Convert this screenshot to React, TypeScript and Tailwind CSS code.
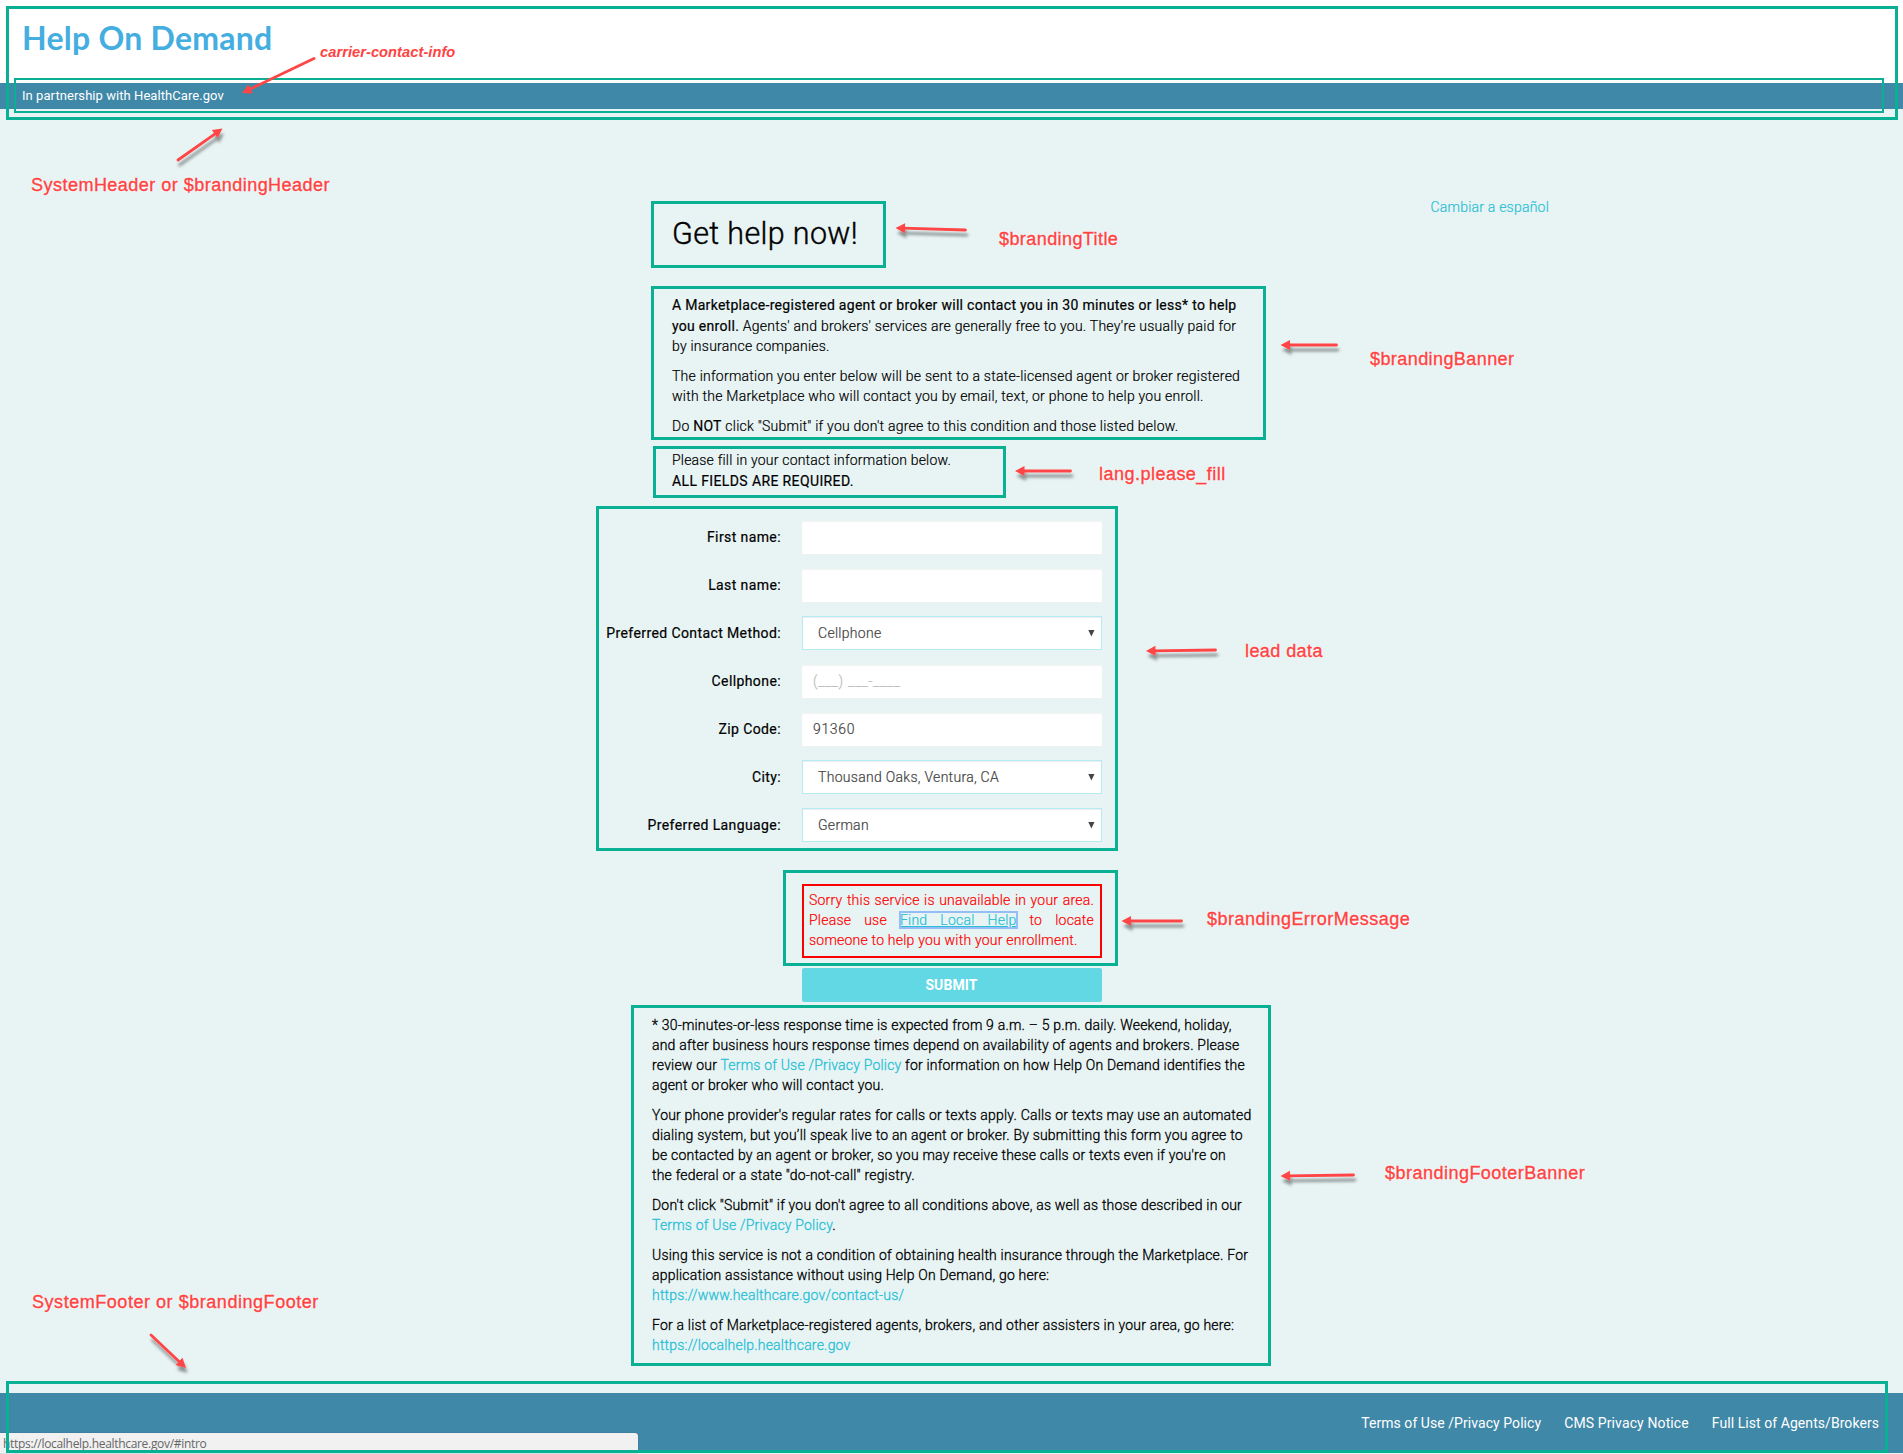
import type { ReactNode } from "react";

const Frame = ({ className }: { className: string }) => (
  <div className={`pointer-events-none absolute border-[#0ab094] ${className}`} />
);

const Note = ({ className, children }: { className: string; children: ReactNode }) => (
  <span
    className={`absolute whitespace-nowrap font-['Liberation_Sans',sans-serif] leading-5 text-[#ff4242] [text-shadow:0_0_2px_#fff,0_0_2px_#fff] ${className}`}
  >
    {children}
  </span>
);

const Link = ({ children, className = "" }: { children: ReactNode; className?: string }) => (
  <a href="#" className={`text-[#2bbfd6] ${className}`}>
    {children}
  </a>
);

type ArrowData = { from: [number, number]; to: [number, number]; flat?: boolean };

const arrows: ArrowData[] = [
  { from: [314, 58.5], to: [242, 93], flat: true },
  { from: [178, 160], to: [222.5, 128.5] },
  { from: [965.5, 230], to: [895.5, 228] },
  { from: [1336.5, 345], to: [1280.5, 345] },
  { from: [1070.5, 471], to: [1015, 471] },
  { from: [1215.5, 650], to: [1146, 651] },
  { from: [1181.5, 921], to: [1121.5, 921] },
  { from: [1353.5, 1175], to: [1280.5, 1176] },
  { from: [151, 1335], to: [186, 1368] },
];

function Arrow({ from, to, flat }: ArrowData) {
  const dx = to[0] - from[0];
  const dy = to[1] - from[1];
  const length = Math.hypot(dx, dy);
  const angle = (Math.atan2(dy, dx) * 180) / Math.PI;
  return (
    <g filter={flat ? undefined : "url(#arrow-shadow)"}>
      <g transform={`translate(${from[0]} ${from[1]}) rotate(${angle})`} fill="#ff4545">
        <path d={`M0 0H${length - 7}`} stroke="#ff4545" strokeWidth="2.8" strokeLinecap="round" />
        <path d={`M${length} 0l-9.5 -5v10z`} />
      </g>
    </g>
  );
}

const fields = [
  { label: "First name:", kind: "input" },
  { label: "Last name:", kind: "input" },
  { label: "Preferred Contact Method:", kind: "select", value: "Cellphone" },
  { label: "Cellphone:", kind: "input", placeholder: "(___) ___-____" },
  { label: "Zip Code:", kind: "input", value: "91360" },
  { label: "City:", kind: "select", value: "Thousand Oaks, Ventura, CA" },
  { label: "Preferred Language:", kind: "select", value: "German" },
];

export default function App() {
  return (
    <div className="relative flex h-[1454px] w-[1903px] flex-col overflow-hidden bg-[#e8f4f4] font-['Roboto',sans-serif] text-sm leading-5 text-black">
      <header className="relative">
        <div className="h-[83px] bg-white pl-[22px] pt-[18px]">
          <h1 className="font-['Lato',sans-serif] text-[32px] font-bold leading-10 tracking-[0.25px] text-[#45aee0]">
            Help On Demand
          </h1>
        </div>
        <div className="h-[26px] bg-[#4088a8] pl-[22px] text-[13px] leading-[25px] tracking-[0.06px] text-white">
          In partnership with HealthCare.gov
        </div>
        <Frame className="left-[6px] top-[6px] h-[114px] w-[1892px] border-[3px]" />
        <Frame className="left-[14px] top-[78px] h-[35px] w-[1870px] border-2" />
      </header>

      <main className="ml-[652px] grow">
        <section className="relative mt-[88px] flex w-[897px] items-start justify-between pl-5 pt-[17px] font-light [-webkit-text-stroke:0.2px_currentColor]">
          <h2 className="text-[30.5px] leading-10 tracking-[0.35px] [-webkit-text-stroke:0.4px_currentColor]">Get help now!</h2>
          <Link className="-mt-[17px] tracking-[0.22px]">Cambiar a español</Link>
          <Frame className="left-[-1px] top-[4px] h-[67px] w-[235px] border-[3px]" />
        </section>

        <section className="relative mt-[41px] flex w-[620px] flex-col gap-2.5 whitespace-nowrap pl-5 font-light tracking-[0.24px] [-webkit-text-stroke:0.2px_currentColor]">
          <p>
            <span className="block h-[21px] font-normal tracking-[0.29px]">
              A Marketplace-registered agent or broker will contact you in 30 minutes or less* to help
            </span>
            <span className="font-normal tracking-[0.29px]">you enroll.</span> Agents' and brokers' services are
            generally free to you. They're usually paid for
            <br />
            by insurance companies.
          </p>
          <p>
            The information you enter below will be sent to a state-licensed agent or broker registered
            <br />
            with the Marketplace who will contact you by email, text, or phone to help you enroll.
          </p>
          <p>
            Do <b>NOT</b> click "Submit" if you don't agree to this condition and those listed below.
          </p>
          <Frame className="left-[-1px] top-[-9px] h-[154px] w-[615px] border-[3px]" />
        </section>

        <section className="relative mt-[14px] pl-5 [-webkit-text-stroke:0.2px_currentColor]">
          <p className="h-[21px] font-light tracking-[0.2px]">Please fill in your contact information below.</p>
          <p className="font-normal tracking-[0.38px]">ALL FIELDS ARE REQUIRED.</p>
          <Frame className="left-[1px] top-[-4px] h-[52px] w-[353px] border-[3px]" />
        </section>

        <section className="relative -ml-[52px] mt-[29px] flex w-[502px] flex-col gap-[14px] [-webkit-text-stroke:0.2px_currentColor]">
          {fields.map((f) => (
            <div key={f.label} className="grid h-[34px] grid-cols-[181px_300px] grid-rows-[34px] gap-x-[21px]">
              <label className="text-right leading-[34px] tracking-[0.4px]">{f.label}</label>
              {f.kind === "select" ? (
                <div className="flex items-center justify-between border border-[#b5ebf3] bg-white pl-[15px] pr-[6px] font-light tracking-[0.29px] text-[#444] shadow-[inset_0_1px_1px_rgba(0,0,0,0.075)]">
                  {f.value}
                  <svg width="7" height="7" viewBox="0 0 7 7" fill="#444">
                    <path d="M0.3 0h6.2L3.4 6.5z" />
                  </svg>
                </div>
              ) : (
                <div className="flex items-center border-t border-[#ebf4f4] bg-white pb-px pl-[11px] font-light tracking-[0.65px] text-[#444] shadow-[inset_0_1px_1px_rgba(0,0,0,0.05)]">
                  {f.value}
                  {f.placeholder && <span className="tracking-[0.75px] text-[#bbb]">{f.placeholder}</span>}
                </div>
              )}
            </div>
          ))}
          <Frame className="left-[-4px] top-[-14px] h-[345px] w-[522px] border-[3px]" />
        </section>

        <section className="relative ml-[150px] mt-[42px] w-[300px]">
          <p className="h-[74px] border-2 border-[red] pl-[5px] pr-[6px] pt-1 text-justify font-light tracking-[0.22px] text-[red] [-webkit-text-stroke:0.2px_currentColor]">
            Sorry this service is unavailable in your area. Please use{" "}
            <Link className="underline outline-2 -outline-offset-1 outline-[#94bdf5]">Find Local Help</Link> to locate
            someone to help you with your enrollment.
          </p>
          <Frame className="left-[-19px] top-[-14px] h-[96px] w-[335px] border-[3px]" />
        </section>

        <button className="ml-[150px] mt-[10px] block h-[34px] w-[300px] rounded-[2px] bg-[#62d8e5] pr-px font-bold tracking-[0.1px] text-white">
          SUBMIT
        </button>

        <section className="relative mt-[13px] flex w-[620px] flex-col gap-2.5 whitespace-nowrap font-light tracking-[0.2px] [-webkit-text-stroke:0.3px_currentColor]">
          <p>
            * 30-minutes-or-less response time is expected from 9 a.m. – 5 p.m. daily. Weekend, holiday,
            <br />
            and after business hours response times depend on availability of agents and brokers. Please
            <br />
            review our <Link>Terms of Use /Privacy Policy</Link> for information on how Help On Demand identifies the
            <br />
            agent or broker who will contact you.
          </p>
          <p>
            Your phone provider's regular rates for calls or texts apply. Calls or texts may use an automated
            <br />
            dialing system, but you’ll speak live to an agent or broker. By submitting this form you agree to
            <br />
            be contacted by an agent or broker, so you may receive these calls or texts even if you're on
            <br />
            the federal or a state "do-not-call" registry.
          </p>
          <p>
            Don't click "Submit" if you don't agree to all conditions above, as well as those described in our
            <br />
            <Link>Terms of Use /Privacy Policy</Link>.
          </p>
          <p>
            Using this service is not a condition of obtaining health insurance through the Marketplace. For
            <br />
            application assistance without using Help On Demand, go here:
            <br />
            <Link>https://www.healthcare.gov/contact-us/</Link>
          </p>
          <p>
            For a list of Marketplace-registered agents, brokers, and other assisters in your area, go here:
            <br />
            <Link>https://localhelp.healthcare.gov</Link>
          </p>
          <Frame className="left-[-21px] top-[-10px] h-[361px] w-[640px] border-[3px]" />
        </section>
      </main>

      <footer className="relative mb-px h-[60px] bg-[#4088a8] text-white">
        <nav className="flex justify-end gap-[23px] pr-[24px] pt-5 tracking-[0.06px]">
          <a href="#">Terms of Use /Privacy Policy</a>
          <a href="#" className="tracking-[0.12px]">CMS Privacy Notice</a>
          <a href="#">Full List of Agents/Brokers</a>
        </nav>
        <div className="absolute bottom-0 left-0 h-[20px] w-[638px] rounded-tr-[3px] bg-[#f1f1f1] pl-[3px] font-['Open_Sans',sans-serif] text-[12px] leading-[21px] tracking-[-0.31px] text-[#666] shadow-[0_0_1px_#345]">
          https://localhelp.healthcare.gov/#intro
        </div>
        <Frame className="left-[6px] top-[-12px] h-[72px] w-[1882px] border-[3px]" />
      </footer>

      <svg className="pointer-events-none absolute left-0 top-0" width="1903" height="1454">
        <defs>
          <filter id="arrow-shadow" filterUnits="userSpaceOnUse" x="0" y="0" width="1903" height="1454">
            <feDropShadow dx="1.5" dy="5" stdDeviation="1.8" floodColor="#000" floodOpacity="0.4" />
          </filter>
        </defs>
        {arrows.map((a) => (
          <Arrow key={a.from.join()} {...a} />
        ))}
      </svg>

      <Note className="left-[320px] top-[42px] text-[14.67px] font-bold italic tracking-[0.05px]">carrier-contact-info</Note>
      <div className="text-[18px] tracking-[0.48px] [-webkit-text-stroke:0.35px_#ff4242]">
        <Note className="left-[31px] top-[175px]">SystemHeader or $brandingHeader</Note>
        <Note className="left-[999px] top-[229px] tracking-[0.42px]">$brandingTitle</Note>
        <Note className="left-[1370px] top-[349px] tracking-[0.42px]">$brandingBanner</Note>
        <Note className="left-[1099px] top-[464px]">lang.please_fill</Note>
        <Note className="left-[1245px] top-[641px] tracking-[0.42px]">lead data</Note>
        <Note className="left-[1207px] top-[909px]">$brandingErrorMessage</Note>
        <Note className="left-[1385px] top-[1163px]">$brandingFooterBanner</Note>
        <Note className="left-[32px] top-[1292px] tracking-[0.54px]">SystemFooter or $brandingFooter</Note>
      </div>
    </div>
  );
}
